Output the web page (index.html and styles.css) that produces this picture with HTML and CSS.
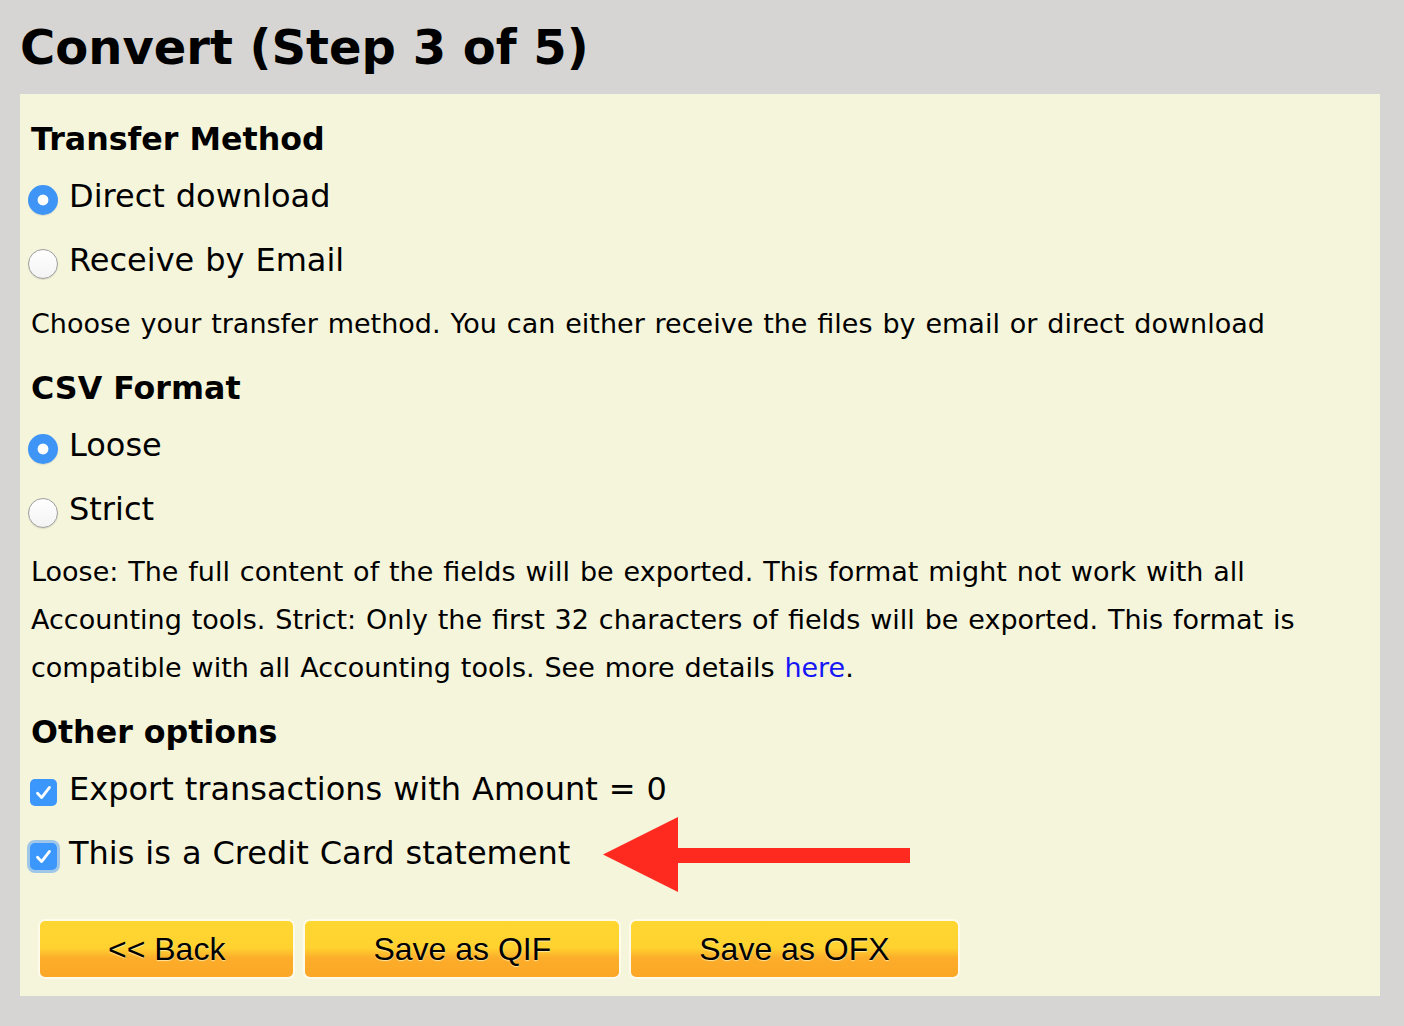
FILE: index.html
```html
<!DOCTYPE html>
<html lang="en">
<head>
<meta charset="utf-8">
<title>Convert (Step 3 of 5)</title>
<link rel="stylesheet" href="styles.css">
</head>
<body>
<h1 class="title">Convert (Step 3 of 5)</h1>
<form class="panel">
  <h2 class="heading">Transfer Method</h2>
  <div class="option"><span class="radio checked"></span><span class="label">Direct download</span></div>
  <div class="option"><span class="radio"></span><span class="label">Receive by Email</span></div>
  <p class="note first-note">Choose your transfer method. You can either receive the files by email or direct download</p>

  <h2 class="heading">CSV Format</h2>
  <div class="option"><span class="radio checked"></span><span class="label">Loose</span></div>
  <div class="option"><span class="radio"></span><span class="label">Strict</span></div>
  <p class="note">Loose: The full content of the fields will be exported. This format might not work with all Accounting tools. Strict: Only the first 32 characters of fields will be exported. This format is compatible with all Accounting tools. See more details <a class="link" href="#">here</a>.</p>

  <h2 class="heading">Other options</h2>
  <div class="option"><span class="check"><svg viewBox="0 0 27 27" width="27" height="27"><path d="M7.5 14.2 L11.6 18.6 L19.5 8.4" fill="none" stroke="#fff" stroke-width="2.8" stroke-linecap="round" stroke-linejoin="round"/></svg></span><span class="label">Export transactions with Amount = 0</span></div>
  <div class="option"><span class="check focused"><svg viewBox="0 0 27 27" width="27" height="27"><path d="M7.5 14.2 L11.6 18.6 L19.5 8.4" fill="none" stroke="#fff" stroke-width="2.8" stroke-linecap="round" stroke-linejoin="round"/></svg></span><span class="label">This is a Credit Card statement</span></div>

  <div class="buttons">
    <button type="button" class="btn">&lt;&lt; Back</button>
    <button type="button" class="btn">Save as QIF</button>
    <button type="button" class="btn">Save as OFX</button>
  </div>

  <svg class="arrow" width="307" height="75" viewBox="0 0 307 75"><polygon points="0,37.5 75,0 75,31 307,31 307,46 75,46 75,75" fill="#ff2a1f"/></svg>
</form>
</body>
</html>
```

FILE: styles.css
```css
html, body {
  margin: 0;
  padding: 0;
  background: #d6d5d3;
}
body {
  font-family: "DejaVu Sans", Verdana, sans-serif;
  color: #000;
  width: 1404px;
  height: 1026px;
  overflow: hidden;
}
.title {
  margin: 0;
  height: 94px;
  line-height: 94px;
  padding-left: 20px;
  font-size: 48px;
  font-weight: bold;
}
.panel {
  position: relative;
  margin: 0 0 0 20px;
  width: 1360px;
  box-sizing: border-box;
  background: #f5f5dc;
  padding: 20px 0 17px 11px;
  display: flex;
  flex-direction: column;
}
.heading {
  margin: 0;
  font-size: 31.7px;
  font-weight: bold;
  line-height: 50px;
}
.note + .heading { margin-top: 15px; }
.option {
  display: flex;
  align-items: center;
  height: 64px;
}
.label {
  font-size: 32px;
  line-height: 64px;
  word-spacing: 0.8px;
}
.radio {
  flex: none;
  width: 30px;
  height: 30px;
  box-sizing: border-box;
  border-radius: 50%;
  margin: 8px 11px 0 -3px;
  background: linear-gradient(#ffffff, #f3f3f3);
  border: 1px solid #9d9d9d;
  box-shadow: 0 1px 1px rgba(0,0,0,0.1);
}
.radio.checked {
  border: none;
  background: radial-gradient(circle, #ffffff 0, #ffffff 5px, #3e95f6 5.8px, #3e95f6 100%);
}
.check {
  flex: none;
  width: 27px;
  height: 27px;
  border-radius: 5px;
  background: #3b97fb;
  margin: 6px 12px 0 -1px;
  display: flex;
}
.check.focused {
  box-shadow: 0 0 0 3px rgba(90, 160, 240, 0.55);
}
.note {
  margin: 7px 0 0 0;
  font-size: 27px;
  line-height: 48px;
  word-spacing: 1.3px;
  width: 1349px;
}
.first-note { margin-top: 8px; }
.link {
  color: #1616f6;
  text-decoration: none;
}
.buttons {
  display: flex;
  gap: 8px;
  margin: 34px 0 0 7px;
}
.btn {
  font-family: "Liberation Sans", Arial, sans-serif;
  font-size: 32px;
  color: #000;
  height: 60px;
  padding: 0 68px;
  border: 2px solid #fffbea;
  border-radius: 7px;
  background: linear-gradient(to bottom, #ffd731 0%, #ffd22f 48%, #fcad2a 66%, #fca727 100%);
  text-shadow: 0 1px 1px rgba(255, 236, 170, 0.9);
  cursor: pointer;
}
.arrow {
  position: absolute;
  left: 583px;
  top: 723px;
}
```
